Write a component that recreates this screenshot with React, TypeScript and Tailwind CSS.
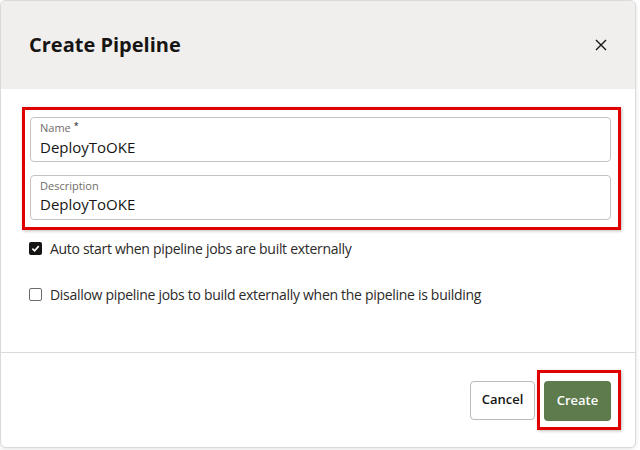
import { useState } from "react";

function CheckBox({ checked, onClick }: { checked: boolean; onClick: () => void }) {
  return (
    <button
      onClick={onClick}
      className={
        checked
          ? "w-[13px] h-[13px] rounded-[2px] bg-[#161513] flex items-center justify-center shrink-0"
          : "w-[13px] h-[13px] rounded-[2px] border border-[#6b6b6b] bg-white shrink-0"
      }
    >
      {checked && (
        <svg width="9" height="9" viewBox="0 0 10 10">
          <path d="M1.5 5.2 L4 7.6 L8.6 2.4" stroke="#fff" strokeWidth="1.8" fill="none" />
        </svg>
      )}
    </button>
  );
}

export default function App() {
  const [name, setName] = useState("DeployToOKE");
  const [description, setDescription] = useState("DeployToOKE");
  const [autoStart, setAutoStart] = useState(true);
  const [disallow, setDisallow] = useState(false);

  return (
    <div
      className="w-[640px] h-[450px] bg-white"
      style={{ fontFamily: '"Open Sans", "Noto Sans", sans-serif' }}
    >
      <div className="w-[636px] h-[448px] bg-white border border-[#dcdad7] rounded-md shadow-[0_1px_4px_rgba(0,0,0,0.12)] overflow-hidden flex flex-col">
        {/* HEADER */}
        <div className="h-[88px] bg-[#f1efed] flex items-center justify-between pl-[28px] pr-[22px] shrink-0">
          <h1 className="text-[20px] font-bold text-[#161513] -mt-[1px]">
            Create Pipeline
          </h1>
          <button className="w-6 h-6 flex items-center justify-center -mt-[1px]">
            <svg width="12" height="12" viewBox="0 0 12 12">
              <path d="M1 1 L11 11 M11 1 L1 11" stroke="#161513" strokeWidth="1.4" />
            </svg>
          </button>
        </div>

        {/* BODY */}
        <div className="flex-1 pt-[18px] pl-[21px] pr-[14px]">
          <div className="border-[3px] border-[#e00000] shadow-[1px_1px_3px_rgba(0,0,0,0.25)] pl-[5px] pr-[7px] pt-[7px] pb-[7px] flex flex-col gap-[13px]">
            <div className="h-[45px] border border-[#c5c3c0] rounded-[4px] pl-[9px] pr-[10px] pt-[3px] flex flex-col">
              <span className="text-[11px] leading-[14px] text-[#6f6c69]">
                Name <span className="relative -top-[3px] text-[9px] text-[#161513]">*</span>
              </span>
              <input
                value={name}
                onChange={(e) => setName(e.target.value)}
                className="text-[15px] leading-[22px] text-[#161513] outline-none bg-transparent"
              />
            </div>
            <div className="h-[45px] border border-[#c5c3c0] rounded-[4px] pl-[9px] pr-[10px] pt-[3px] flex flex-col">
              <span className="text-[11px] leading-[14px] text-[#6f6c69]">Description</span>
              <input
                value={description}
                onChange={(e) => setDescription(e.target.value)}
                className="text-[15px] leading-[22px] text-[#161513] outline-none bg-transparent"
              />
            </div>
          </div>

          <div className="flex items-center gap-[8px] pl-[7px] mt-[11px] h-[14px]">
            <CheckBox checked={autoStart} onClick={() => setAutoStart(!autoStart)} />
            <span className="text-[14px] text-[#2b2a28] tracking-[-0.3px]">
              Auto start when pipeline jobs are built externally
            </span>
          </div>
          <div className="flex items-center gap-[8px] pl-[7px] mt-[32px] h-[14px]">
            <CheckBox checked={disallow} onClick={() => setDisallow(!disallow)} />
            <span className="text-[14px] text-[#2b2a28] tracking-[-0.3px]">
              Disallow pipeline jobs to build externally when the pipeline is building
            </span>
          </div>
        </div>

        {/* FOOTER */}
        <div className="h-[95px] border-t border-[#dcdad7] flex items-center justify-end pr-[14px] shrink-0">
          <button className="w-[65px] h-[39px] border border-[#bdbbb8] rounded-[4px] bg-white text-[13px] font-semibold text-[#161513]">
            Cancel
          </button>
          <div className="ml-[2px] border-[3px] border-[#e00000] shadow-[1px_1px_3px_rgba(0,0,0,0.25)] pl-[4px] pr-[7px] pt-[8px] pb-[6px]">
            <button className="w-[67px] h-[40px] rounded-[4px] bg-[#5d7b4c] text-[13px] font-semibold text-white">
              Create
            </button>
          </div>
        </div>
      </div>
    </div>
  );
}
